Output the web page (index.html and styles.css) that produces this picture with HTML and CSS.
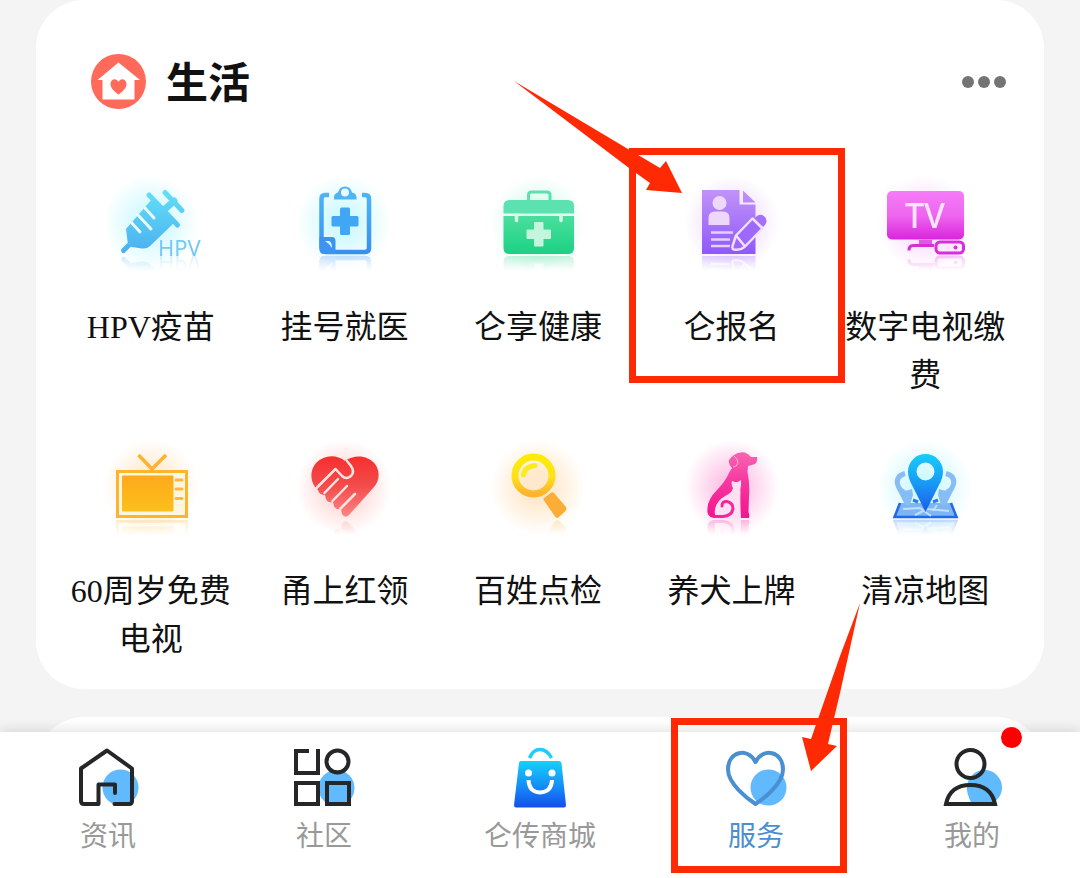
FILE: index.html
```
<!DOCTYPE html>
<html lang="zh-CN">
<head>
  <meta charset="UTF-8">
  <meta name="viewport" content="width=device-width, initial-scale=1.0">
  <title>服务</title>
  <link rel="stylesheet" href="styles.css">
</head>
<body>
  <main class="content">
    <section class="card">
      <header class="card-header">
        <svg class="card-logo" viewBox="0 0 56 56" aria-hidden="true">
          <circle cx="27.5" cy="27.5" r="27.5" fill="#ff6a5a"/>
          <path d="M27.5 8.5 L49 26 H43.5 V45.5 H11.5 V26 H6.5 Z" fill="#fff"/>
          <path d="M27.5 40.5 C22 36.500 19.500 33.500 19.500 30 C19.500 25 25.500 23.500 27.500 28 C29.500 23.500 35.500 25 35.500 30 C35.500 33.500 33 36.500 27.500 40.500 Z" fill="#ff6a5a"/>
        </svg>
        <h2>生活</h2>
        <button class="more" type="button" aria-label="更多">
          <span></span><span></span><span></span>
        </button>
      </header>

      <nav class="grid">
        <a class="item" href="#">
          <span class="icon glow-cyan">
            <svg viewBox="0 0 96 82" aria-hidden="true">
              <defs>
                <linearGradient id="cyan" gradientUnits="userSpaceOnUse" x1="0" y1="15" x2="0" y2="80">
                  <stop offset="0" stop-color="#62e0f8"/><stop offset="1" stop-color="#4aaef0"/>
                </linearGradient>
              </defs>
              <g fill="none" stroke="url(#cyan)" stroke-width="5" stroke-linecap="round">
                <path d="M46 20 L74.500 50"/>
                <path d="M62 17.500 L79 35.500"/>
                <path d="M71 26 L62 34" stroke-width="7"/>
                <path d="M27 69 L20.500 75.500"/>
              </g>
              <path d="M23 54 L49 24 L72 47 L47 71 Q44 74 39 73.500 L29 72 Q25 71 24.500 66 Z" fill="url(#cyan)"/>
              <g stroke="#e9fbff" stroke-width="3" stroke-linecap="round">
                <path d="M28 47 L37 57"/><path d="M35 40 L48 54"/><path d="M42 33 L51 43"/>
              </g>
              <text class="hpv" x="55" y="81" fill="#74c9f5">HPV</text>
            </svg>
          </span>
          <span class="label">HPV疫苗</span>
        </a>

        <a class="item" href="#">
          <span class="icon glow-cyan">
            <svg viewBox="0 0 96 82" aria-hidden="true">
              <defs>
                <linearGradient id="blue" gradientUnits="userSpaceOnUse" x1="0" y1="12" x2="0" y2="80">
                  <stop offset="0" stop-color="#4db9f6"/><stop offset="1" stop-color="#3a8df2"/>
                </linearGradient>
              </defs>
              <path d="M33 20 H29 Q25.500 20 25.500 24 V72 Q25.500 77 30 77 H69 Q73 77 73 73 V24 Q73 20 69 20 H66" fill="none" stroke="url(#blue)" stroke-width="4.500"/>
              <path fill-rule="evenodd" d="M38 24.500 Q37.500 18 42 17.500 Q43.500 11.500 49 11.500 Q54.500 11.500 56 17.500 Q61 18 60.500 24.500 Z M49 13.500 A4 4 0 1 0 49 21.500 A4 4 0 1 0 49 13.500 Z" fill="#4db4f5"/>
              <path d="M45.500 32.500 H52.500 Q54 32.500 54 34 V41 H61 Q62.500 41 62.500 42.500 V50 Q62.500 51.500 61 51.500 H54 V58.500 Q54 60 52.500 60 H45.500 Q44 60 44 58.500 V51.500 H37 Q35.500 51.500 35.500 50 V42.500 Q35.500 41 37 41 H44 V34 Q44 32.500 45.500 32.500 Z" fill="#41a6f3"/>
              <path d="M23.500 62 H36 Q39.500 62 39.500 66 V79 H28 Q23.500 79 23.500 74 Z" fill="#3d93f3"/>
              <path d="M29 66 H33 Q36 67 36 73 Q34 69 29 66 Z" fill="#dcf8ff"/>
            </svg>
          </span>
          <span class="label">挂号就医</span>
        </a>

        <a class="item" href="#">
          <span class="icon glow-green">
            <svg viewBox="0 0 96 82" aria-hidden="true">
              <defs>
                <linearGradient id="green" x1="0" y1="0" x2="0" y2="1">
                  <stop offset="0" stop-color="#4adf9e"/><stop offset="1" stop-color="#1bd183"/>
                </linearGradient>
              </defs>
              <path d="M38.500 26 V20 Q38.500 17 41.500 17 H57 Q60 17 60 20 V26" fill="none" stroke="#5ddfae" stroke-width="3"/>
              <path d="M13.500 38.500 V31 Q13.500 25 19.500 25 H78 Q84 25 84 31 V38.500 Z" fill="#5ce2b0"/>
              <path d="M13.500 41 H84 V73 Q84 79 78 79 H19.500 Q13.500 79 13.500 73 Z" fill="url(#green)"/>
              <path d="M26.500 40 V45.500 M71 40 V45.500" stroke="#d6fae8" stroke-width="3.500" stroke-linecap="round"/>
              <path d="M44.500 47.500 H53 V55 H60.500 V63.500 H53 V71 H44.500 V63.500 H37 V55 H44.500 Z" fill="#c3f6dd" stroke="#c3f6dd" stroke-linejoin="round"/>
            </svg>
          </span>
          <span class="label">仑享健康</span>
        </a>

        <a class="item marked" href="#">
          <span class="icon glow-purple">
            <svg viewBox="0 0 96 82" aria-hidden="true">
              <defs>
                <linearGradient id="purple" gradientUnits="userSpaceOnUse" x1="0" y1="15" x2="0" y2="79">
                  <stop offset="0" stop-color="#c193f8"/><stop offset="1" stop-color="#8f58fb"/>
                </linearGradient>
              </defs>
              <path d="M18 15 H55.500 V29.500 H71.500 V79 H18 Z" fill="url(#purple)"/>
              <path d="M59 15.500 L71.500 27.500 H59 Z" fill="url(#purple)"/>
              <circle cx="35.500" cy="28" r="7" fill="#edd8fc"/>
              <path d="M24.500 50 V43 Q24.500 36.500 31 36.500 H39 Q45.500 36.500 45.500 43 V50 Z" fill="#edd8fc"/>
              <path d="M27 57.500 H49 M27 64.500 H46 M27 71 H46" stroke="#e4d2fd" stroke-width="2.500"/>
              <path d="M73 41 Q77 38 81 42 Q84 46 81 50 L79 52 L70 44 Z" fill="#a470f8"/>
              <path d="M68.500 43.500 L78.500 53.500 L61 71.500 Q57 75.500 50 74.500 Q47 74 49.500 68 L52 60.500 Z M52 60.500 L61 71.500" fill="#9e68fa" stroke="#efe1fe" stroke-width="2.500" stroke-linejoin="round"/>
            </svg>
          </span>
          <span class="label">仑报名</span>
          <svg class="arrow arrow-item" viewBox="0 0 168 113" aria-hidden="true">
            <path d="M0 0 L114 68 L146 87 L152 80 L168 112 L132 109 L136 102 L115 87 Z" fill="#ff2a04"/>
          </svg>
        </a>

        <a class="item" href="#">
          <span class="icon glow-pink">
            <svg viewBox="0 0 96 82" aria-hidden="true">
              <defs>
                <linearGradient id="magenta" x1="0" y1="0" x2="0" y2="1">
                  <stop offset="0" stop-color="#f67cf8"/><stop offset="0.500" stop-color="#ee66ef"/><stop offset="1" stop-color="#da25dc"/>
                </linearGradient>
              </defs>
              <rect x="10" y="16" width="77" height="48.500" rx="5" fill="url(#magenta)"/>
              <text class="tv" x="48" y="53" text-anchor="middle" fill="#fde5fd">TV</text>
              <rect x="42" y="65" width="13" height="5" fill="#d95ddf"/>
              <path d="M57 70.500 H36 Q32 70.500 32 75.500" fill="none" stroke="#d62fd9" stroke-width="3"/>
              <rect x="59" y="67" width="27.500" height="11" rx="4" fill="#fde8fd" stroke="#d62fd9" stroke-width="3"/>
              <circle cx="78.500" cy="72.500" r="2" fill="#d62fd9"/>
            </svg>
          </span>
          <span class="label">数字电视缴费</span>
        </a>

        <a class="item" href="#">
          <span class="icon glow-orange">
            <svg viewBox="0 0 96 82" aria-hidden="true">
              <defs>
                <linearGradient id="orange" x1="0" y1="0" x2="0" y2="1">
                  <stop offset="0" stop-color="#fda91d"/><stop offset="1" stop-color="#fcc01a"/>
                </linearGradient>
              </defs>
              <path d="M35.500 16 L49 30 L63 16" fill="none" stroke="#fcb232" stroke-width="3.500"/>
              <rect x="14.500" y="32.500" width="69" height="45" fill="#fff6e2" stroke="#fbb62b" stroke-width="3"/>
              <rect x="19" y="36.500" width="51.500" height="36" rx="1" fill="url(#orange)"/>
              <path d="M73 41 H79 M73 50 H79 M73 59.500 H79" stroke="#fcb83a" stroke-width="3" stroke-linecap="round"/>
            </svg>
          </span>
          <span class="label">60周岁免费电视</span>
        </a>

        <a class="item" href="#">
          <span class="icon glow-red">
            <svg viewBox="0 0 96 82" aria-hidden="true">
              <defs>
                <linearGradient id="red" gradientUnits="userSpaceOnUse" x1="0" y1="18" x2="0" y2="78">
                  <stop offset="0" stop-color="#f62f2f"/><stop offset="0.500" stop-color="#f34d4d"/><stop offset="1" stop-color="#fb8787"/>
                </linearGradient>
              </defs>
              <path d="M49 22 C58 15 72 16 79 25 C84 32 84 41 78 48 L53 76 Q49 80 46 75 L45 70 Q40 71 38 67 L37 63 Q32 64 30 60 L29 56 Q23 56 22 51 L19 48 C14 41 14 31 20 24 C28 16 40 15 49 22 Z" fill="url(#red)"/>
              <g fill="none" stroke="#ffe3e0" stroke-width="2.500" stroke-linecap="round" stroke-linejoin="round">
                <path d="M20.500 49 L39.500 30 L46 37 Q50 41 55 37 Q59 33 55 27 L51 22"/>
                <path d="M28.500 54 L42 40"/>
                <path d="M36.500 62 L51 47"/>
                <path d="M44.500 69.500 L59 55"/>
              </g>
            </svg>
          </span>
          <span class="label">甬上红领</span>
        </a>

        <a class="item" href="#">
          <span class="icon glow-orange">
            <svg viewBox="0 0 96 82" aria-hidden="true">
              <defs>
                <linearGradient id="yellow" gradientUnits="userSpaceOnUse" x1="0" y1="15" x2="0" y2="80">
                  <stop offset="0" stop-color="#fdec05"/><stop offset="0.350" stop-color="#fde217"/><stop offset="0.600" stop-color="#fcb52e"/><stop offset="1" stop-color="#fca433"/>
                </linearGradient>
              </defs>
              <circle cx="43.500" cy="36.500" r="18.500" fill="none" stroke="url(#yellow)" stroke-width="7"/>
              <path d="M33.500 36 Q34 28 45 26.500" fill="none" stroke="#fce91f" stroke-width="5" stroke-linecap="round"/>
              <path d="M54 59 L61.500 53.500 Q63 53 64 54 L76 68 Q77 70 75.500 72 L69 78 Q67 80 65 77.500 L54 61.500 Q53 60 54 59 Z" fill="#fbad35"/>
            </svg>
          </span>
          <span class="label">百姓点检</span>
        </a>

        <a class="item" href="#">
          <span class="icon glow-rose">
            <svg viewBox="0 0 96 82" aria-hidden="true">
              <defs>
                <linearGradient id="rose" gradientUnits="userSpaceOnUse" x1="0" y1="13" x2="0" y2="79">
                  <stop offset="0" stop-color="#f666b2"/><stop offset="0.450" stop-color="#f7379f"/><stop offset="1" stop-color="#f3138f"/>
                </linearGradient>
              </defs>
              <path d="M50 16 Q54 12.500 61 13.500 Q65 15 67 18 L73 18 Q74 22 71 25 L64 27 L63.500 33 Q66 45 65 58 L64.500 73 Q66 76 65 79 H30 Q22 78 23.500 69 Q24 60 33 51 Q41 43 45.500 33 L48 29 Q44 25 45 21 Q47 18 50 16 Z" fill="url(#rose)"/>
              <path d="M48 42 L51 43 H54 L57 41 V47 Q56 50 56.500 53 Q56 60 57 79.500 H33 Q30 76 31 70 Q33 61 42 56.500 Q48 54 49 49 Q47 46 48 42 Z" fill="#fde0f1"/>
              <path d="M38 67 Q38 62 43 62.500 Q49 64 49 69.500 Q48 77 39 77.500 H31" fill="none" stroke="#f4269a" stroke-width="3" stroke-linecap="round"/>
              <path d="M50 17 Q54 20 54 24 Q53 28 49 28" fill="none" stroke="#fbb1d8"/>
            </svg>
          </span>
          <span class="label">养犬上牌</span>
        </a>

        <a class="item" href="#">
          <span class="icon glow-cyan">
            <svg viewBox="0 0 96 82" aria-hidden="true">
              <defs>
                <linearGradient id="pin" x1="0" y1="0" x2="0" y2="1">
                  <stop offset="0" stop-color="#17cdf9"/><stop offset="0.500" stop-color="#189af5"/><stop offset="1" stop-color="#1b5cec"/>
                </linearGradient>
              </defs>
              <path d="M23 64 H74 L81 79 H16 Z" fill="#7eb5f5"/>
              <path d="M23 64 L17.500 78 H79.500 L74 64" fill="none" stroke="#2268e8" stroke-width="2.500"/>
              <path d="M26 70 L43 69 L54 77 M38 76 L50 70 L72 72 M60 66 L56 72" fill="none" stroke="#bfe0fc" stroke-width="2"/>
              <g fill="none" stroke="#87bdf5" stroke-width="5">
                <path d="M28 34.500 Q19 37 20.500 45 Q22 51 27 53"/>
                <path d="M69 34.500 Q78 37 76.500 45 Q75 51 70 53"/>
              </g>
              <path d="M20 50 Q28 53 35 50 L36 56 L33 66 H28 Z M77 50 Q69 53 62 50 L61 56 L64 66 H69 Z" fill="#87bdf5"/>
              <path d="M36 61 L41 63 M61 61 L56 63" stroke="#2c7cec" stroke-width="3"/>
              <path fill-rule="evenodd" d="M48.500 73 L35 46 Q31 39 31 32.500 A17.500 17.500 0 0 1 66 32.500 Q66 39 62 46 Z M48.500 23.500 A9 9 0 1 0 48.500 41.500 A9 9 0 1 0 48.500 23.500 Z" fill="url(#pin)"/>
            </svg>
          </span>
          <span class="label">清凉地图</span>
        </a>
      </nav>
    </section>

    <section class="card next-card"></section>
  </main>

  <nav class="tabbar">
    <a class="tab" href="#">
      <svg class="tab-icon" viewBox="0 0 64 64" aria-hidden="true">
        <circle cx="44.500" cy="41.500" r="18" fill="#61b9fe"/>
        <path d="M38.500 58 H53 Q56 58 56 55 V22.500 L31 4.500 L5 22.500 V55 Q5 58 8 58 H22.500 V38.500 H39 V47" fill="none" stroke="#242627" stroke-width="4" stroke-linecap="round" stroke-linejoin="round"/>
      </svg>
      <span>资讯</span>
    </a>
    <a class="tab" href="#">
      <svg class="tab-icon" viewBox="0 0 64 64" aria-hidden="true">
        <circle cx="44.500" cy="42" r="18" fill="#61b9fe"/>
        <g fill="none" stroke="#242627" stroke-width="4">
          <path d="M17 5 H4 V27 H26 V3"/>
          <circle cx="45.500" cy="15.500" r="11"/>
          <rect x="4" y="37" width="22" height="21"/>
          <rect x="35" y="37" width="22" height="21"/>
        </g>
      </svg>
      <span>社区</span>
    </a>
    <a class="tab" href="#">
      <svg class="tab-icon" viewBox="0 0 64 64" aria-hidden="true">
        <defs>
          <linearGradient id="bag" x1="0" y1="0" x2="0" y2="1">
            <stop offset="0" stop-color="#17cffb"/><stop offset="0.500" stop-color="#1593f8"/><stop offset="1" stop-color="#134eed"/>
          </linearGradient>
        </defs>
        <path d="M21.500 12 Q25 3.500 32 3.500 Q39 3.500 43.500 12" fill="none" stroke="#1fcdf8" stroke-width="3.500"/>
        <path d="M13 15 H51 Q53 15 53.500 17 L58 59 Q58 61.500 56 61.500 H8 Q6 61.500 6 59 L11 17 Q11 15 13 15 Z" fill="url(#bag)"/>
        <circle cx="20.500" cy="27" r="3.500" fill="#fff"/>
        <circle cx="44" cy="27" r="3.500" fill="#fff"/>
        <path d="M20.500 34 Q21 46 32 46.500 Q43.500 46 44 34" fill="none" stroke="#fff" stroke-width="4"/>
      </svg>
      <span>仑传商城</span>
    </a>
    <a class="tab active marked" href="#">
      <svg class="tab-icon" viewBox="0 0 64 64" aria-hidden="true">
        <circle cx="44.500" cy="41.500" r="18" fill="#61b9fe"/>
        <path d="M31.500 58 C24 53 4 38 4 23.500 C4 5 24 1 31.500 16 C39 1 59 5 59 23.500 C59 38 39 53 31.500 58 Z" fill="none" stroke="#4a90d0" stroke-width="4" stroke-linejoin="round"/>
      </svg>
      <span>服务</span>
      <svg class="arrow arrow-tab" viewBox="0 0 58 168" aria-hidden="true">
        <path d="M58 0 L38 53 L9 136 L0 134 L9 168 L35 143 L26 141 L38 90 Z" fill="#ff2a04"/>
      </svg>
    </a>
    <a class="tab" href="#">
      <svg class="tab-icon" viewBox="0 0 64 64" aria-hidden="true">
        <circle cx="44.500" cy="41.500" r="17.500" fill="#61b9fe"/>
        <path d="M6 58 Q10 39 30.500 39 Q51 39 55.500 58 Z" fill="#fff"/>
        <path d="M30.500 39 Q51 39 55.500 58 H32 Q26 48 27 39 Z" fill="#61b9fe"/>
        <circle cx="30.500" cy="18" r="14" fill="none" stroke="#242627" stroke-width="4"/>
        <path d="M6 58 Q10 39 30.500 39 Q51 39 55 58 Z" fill="none" stroke="#242627" stroke-width="4"/>
      </svg>
      <span>我的</span>
      <i class="dot"></i>
    </a>
  </nav>
</body>
</html>
```
FILE: styles.css
```
* {
  box-sizing: border-box;
}
body {
  margin: 0;
  height: 100vh;
  display: flex;
  flex-direction: column;
  background-color: #f4f4f4;
  font-family: "Liberation Serif", "Noto Sans CJK SC", sans-serif;
  color: #111;
  overflow: hidden;
}
a {
  color: inherit;
  text-decoration: none;
}
.content {
  flex: 1;
  min-height: 0;
  overflow: hidden;
}

/* cards */
.card {
  margin: 0 36px 28px;
  padding: 54px 22px 26px 18px;
  background-color: #fff;
  border-radius: 48px;
}
.next-card {
  min-height: 160px;
}
.card-header {
  display: flex;
  align-items: center;
  height: 56px;
  margin-bottom: 65px;
  padding: 0 16px 0 37px;
}
.card-logo {
  width: 56px;
  height: 56px;
}
.card-header h2 {
  margin: 0 auto 0 19px;
  padding-top: 4px;
  font-size: 42px;
  line-height: 56px;
  font-weight: 700;
}
.more {
  display: flex;
  gap: 4px;
  padding: 0;
  border: none;
  background: none;
  cursor: pointer;
}
.more span {
  width: 12px;
  height: 12px;
  border-radius: 50%;
  background-color: #747474;
}

/* service grid */
.grid {
  display: grid;
  grid-template-columns: repeat(5, 1fr);
  row-gap: 40px;
}
.item {
  position: relative;
  display: flex;
  flex-direction: column;
  align-items: center;
  min-height: 224px;
}
.icon {
  width: 96px;
  height: 96px;
  margin-bottom: 32px;
}
.icon svg {
  display: block;
  width: 96px;
  height: 82px;
  overflow: visible;
  -webkit-box-reflect: below -4px linear-gradient(transparent 78%, rgba(0, 0, 0, 0.3));
}
.label {
  padding: 0 8px;
  font-size: 32px;
  line-height: 48px;
  text-align: center;
}
.hpv {
  font: 22px "Noto Sans", sans-serif;
}
.tv {
  font: 500 34px "Noto Sans", sans-serif;
}
.glow-cyan {
  background: radial-gradient(circle, #d3f9ff 20%, rgba(225, 251, 255, 0) 70%);
}
.glow-green {
  background: radial-gradient(circle, #d5f9ea 20%, rgba(225, 251, 240, 0) 70%);
}
.glow-purple {
  background: radial-gradient(circle, #efdcfd 20%, rgba(245, 232, 255, 0) 70%);
}
.glow-pink {
  background: radial-gradient(circle, #fbdcfc 20%, rgba(253, 235, 253, 0) 70%);
}
.glow-orange {
  background: radial-gradient(circle, #ffe9cc 20%, rgba(255, 243, 226, 0) 70%);
}
.glow-red {
  background: radial-gradient(circle, #ffd6d3 20%, rgba(255, 232, 230, 0) 70%);
}
.glow-rose {
  background: radial-gradient(circle, #fdc8e8 20%, rgba(254, 226, 243, 0) 70%);
}

/* bottom tab bar */
.tabbar {
  position: relative;
  display: grid;
  grid-template-columns: repeat(5, 1fr);
  background-color: #fff;
  box-shadow: 0 -2px 12px rgba(0, 0, 0, 0.12);
}
.tab {
  position: relative;
  display: flex;
  flex-direction: column;
  align-items: center;
  padding: 14px 0 23px;
  color: #999;
  font-size: 28px;
  line-height: 36px;
}
.tab-icon {
  width: 64px;
  height: 64px;
  margin-bottom: 9px;
}
.tab.active {
  color: #4a90d0;
}
.dot {
  position: absolute;
  top: -5px;
  left: 137px;
  width: 21px;
  height: 21px;
  border-radius: 50%;
  background-color: #f00;
}

/* red guide marks over the page */
.marked {
  z-index: 1;
}
.marked::after {
  content: "";
  position: absolute;
  border: 7px solid #ff2a04;
}
.item.marked::after {
  inset: -27px -17px 16px -6px;
}
.tab.marked::after {
  inset: -14px 17px 5px 23px;
}
.arrow {
  position: absolute;
  z-index: 1;
}
.arrow-item {
  width: 168px;
  height: 113px;
  top: -94px;
  left: -121px;
}
.arrow-tab {
  width: 58px;
  height: 168px;
  top: -129px;
  left: 154px;
}
```
